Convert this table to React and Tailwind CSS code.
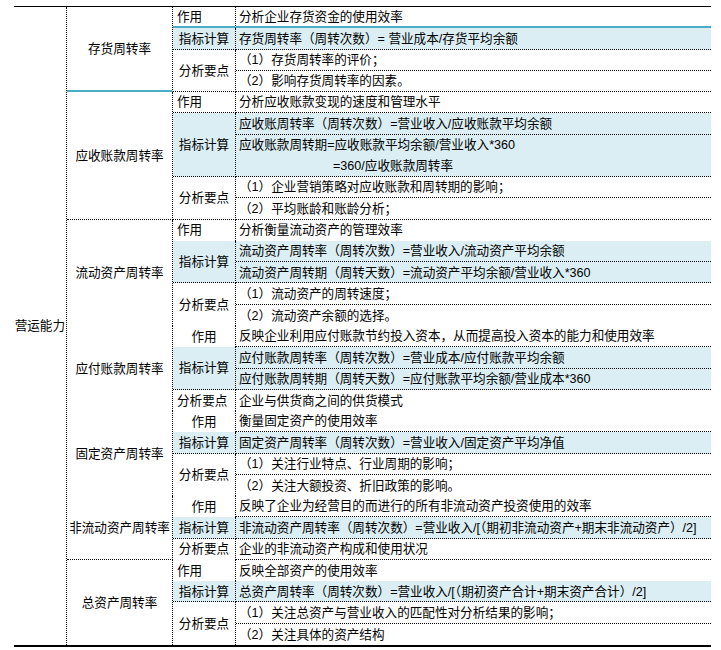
import React from "react";

// 营运能力 analysis table, drawn like an Excel sheet with dotted cell borders

const BLUE_BG = "bg-[#daeef3]";

const cells = [
  // column 1
  { cls: "col-start-1 row-start-1 row-span-30 justify-end pr-px border-r border-dotted border-black", text: "营运能力" },

  // column 2
  { cls: "col-start-2 row-start-1 row-span-4 justify-center border-r border-b-2 border-dotted border-r-black [border-bottom-style:solid] border-b-[#4bacc6]", text: "存货周转率" },
  { cls: "col-start-2 row-start-5 row-span-6 justify-center border-r border-b border-dotted border-black", text: "应收账款周转率" },
  { cls: "col-start-2 row-start-11 row-span-5 justify-center border-r border-dotted border-black", text: "流动资产周转率" },
  { cls: "col-start-2 row-start-16 row-span-4 justify-center border-r border-dotted border-black", text: "应付账款周转率" },
  { cls: "col-start-2 row-start-20 row-span-4 justify-center border-r border-dotted border-black", text: "固定资产周转率" },
  { cls: "col-start-2 row-start-24 row-span-3 justify-center border-r border-b border-dotted border-black", text: "非流动资产周转率" },
  { cls: "col-start-2 row-start-27 row-span-4 justify-center border-r border-dotted border-black", text: "总资产周转率" },

  // column 3
  { cls: "col-start-3 row-start-1 pl-[4px] border-r border-b-2 border-dotted border-r-black [border-bottom-style:solid] border-b-[#4bacc6]", text: "作用" },
  { cls: "col-start-3 row-start-2 justify-center border-r border-b border-dotted border-black " + BLUE_BG, text: "指标计算" },
  { cls: "col-start-3 row-start-3 row-span-2 justify-center border-r border-b border-dotted border-black", text: "分析要点" },
  { cls: "col-start-3 row-start-5 pl-[4px] border-r border-b border-dotted border-black", text: "作用" },
  { cls: "col-start-3 row-start-6 row-span-3 justify-center border-r border-b border-dotted border-black " + BLUE_BG, text: "指标计算" },
  { cls: "col-start-3 row-start-9 row-span-2 justify-center border-r border-b border-dotted border-black", text: "分析要点" },
  { cls: "col-start-3 row-start-11 pl-[4px] border-r border-dotted border-black", text: "作用" },
  { cls: "col-start-3 row-start-12 row-span-2 justify-center border-r border-b border-dotted border-black " + BLUE_BG, text: "指标计算" },
  { cls: "col-start-3 row-start-14 row-span-2 justify-center border-r border-dotted border-black", text: "分析要点" },
  { cls: "col-start-3 row-start-16 justify-center border-r border-dotted border-black", text: "作用" },
  { cls: "col-start-3 row-start-17 row-span-2 justify-center border-r border-b border-dotted border-black " + BLUE_BG, text: "指标计算" },
  { cls: "col-start-3 row-start-19 pl-[4px] border-r border-dotted border-black", text: "分析要点" },
  { cls: "col-start-3 row-start-20 justify-center border-r border-dotted border-black", text: "作用" },
  { cls: "col-start-3 row-start-21 justify-center border-r border-b border-dotted border-black " + BLUE_BG, text: "指标计算" },
  { cls: "col-start-3 row-start-22 row-span-2 justify-center border-r border-dotted border-black", text: "分析要点" },
  { cls: "col-start-3 row-start-24 justify-center border-r border-dotted border-black", text: "作用" },
  { cls: "col-start-3 row-start-25 justify-center border-r border-b border-dotted border-black " + BLUE_BG, text: "指标计算" },
  { cls: "col-start-3 row-start-26 justify-center border-r border-dotted border-black", text: "分析要点" },
  { cls: "col-start-3 row-start-27 pl-[4px] border-r border-dotted border-black", text: "作用" },
  { cls: "col-start-3 row-start-28 justify-center border-r border-b border-dotted border-black " + BLUE_BG, text: "指标计算" },
  { cls: "col-start-3 row-start-29 row-span-2 justify-center border-r border-dotted border-black", text: "分析要点" },

  // column 4
  { cls: "col-start-4 row-start-1 border-b-2 border-solid border-[#4bacc6]", text: "分析企业存货资金的使用效率" },
  { cls: "col-start-4 row-start-2 border-b border-dotted border-black " + BLUE_BG, text: "存货周转率（周转次数）= 营业成本/存货平均余额" },
  { cls: "col-start-4 row-start-3 border-b border-dotted border-black", text: "（1）存货周转率的评价；" },
  { cls: "col-start-4 row-start-4 border-b border-dotted border-black", text: "（2）影响存货周转率的因素。" },
  { cls: "col-start-4 row-start-5 border-b border-dotted border-black", text: "分析应收账款变现的速度和管理水平" },
  { cls: "col-start-4 row-start-6 border-b border-dotted border-black " + BLUE_BG, text: "应收账周转率（周转次数）=营业收入/应收账款平均余额" },
  { cls: "col-start-4 row-start-7 " + BLUE_BG, text: "应收账款周转期=应收账款平均余额/营业收入*360" },
  { cls: "col-start-4 row-start-8 !pl-[97px] border-b border-dotted border-black " + BLUE_BG, text: "=360/应收账款周转率" },
  { cls: "col-start-4 row-start-9 border-b border-dotted border-black", text: "（1）企业营销策略对应收账款和周转期的影响；" },
  { cls: "col-start-4 row-start-10 border-b border-dotted border-black", text: "（2）平均账龄和账龄分析；" },
  { cls: "col-start-4 row-start-11", text: "分析衡量流动资产的管理效率" },
  { cls: "col-start-4 row-start-12 border-b border-dotted border-black " + BLUE_BG, text: "流动资产周转率（周转次数）=营业收入/流动资产平均余额" },
  { cls: "col-start-4 row-start-13 border-b border-dotted border-black " + BLUE_BG, text: "流动资产周转期（周转天数）=流动资产平均余额/营业收入*360" },
  { cls: "col-start-4 row-start-14 border-b border-dotted border-black", text: "（1）流动资产的周转速度；" },
  { cls: "col-start-4 row-start-15", text: "（2）流动资产余额的选择。" },
  { cls: "col-start-4 row-start-16 border-b border-dotted border-black", text: "反映企业利用应付账款节约投入资本，从而提高投入资本的能力和使用效率" },
  { cls: "col-start-4 row-start-17 border-b border-dotted border-black " + BLUE_BG, text: "应付账款周转率（周转次数）=营业成本/应付账款平均余额" },
  { cls: "col-start-4 row-start-18 border-b border-dotted border-black " + BLUE_BG, text: "应付账款周转期（周转天数）=应付账款平均余额/营业成本*360" },
  { cls: "col-start-4 row-start-19", text: "企业与供货商之间的供货模式" },
  { cls: "col-start-4 row-start-20 border-b border-dotted border-black", text: "衡量固定资产的使用效率" },
  { cls: "col-start-4 row-start-21 border-b border-dotted border-black " + BLUE_BG, text: "固定资产周转率（周转次数）=营业收入/固定资产平均净值" },
  { cls: "col-start-4 row-start-22 border-b border-dotted border-black", text: "（1）关注行业特点、行业周期的影响；" },
  { cls: "col-start-4 row-start-23", text: "（2）关注大额投资、折旧政策的影响。" },
  { cls: "col-start-4 row-start-24 border-b border-dotted border-black", text: "反映了企业为经营目的而进行的所有非流动资产投资使用的效率" },
  { cls: "col-start-4 row-start-25 border-b border-dotted border-black " + BLUE_BG, text: "非流动资产周转率（周转次数）=营业收入/[（期初非流动资产+期末非流动资产）/2]" },
  { cls: "col-start-4 row-start-26 border-b border-dotted border-black", text: "企业的非流动资产构成和使用状况" },
  { cls: "col-start-4 row-start-27", text: "反映全部资产的使用效率" },
  { cls: "col-start-4 row-start-28 border-b border-dotted border-black " + BLUE_BG, text: "总资产周转率（周转次数）=营业收入/[（期初资产合计+期末资产合计）/2]" },
  { cls: "col-start-4 row-start-29 border-b border-dotted border-black", text: "（1）关注总资产与营业收入的匹配性对分析结果的影响；" },
  { cls: "col-start-4 row-start-30", text: "（2）关注具体的资产结构" },
];

const App = () => {
  return (
    <div className="min-h-[650px] w-[721px] bg-white pt-[6px] pl-[14px] font-['Liberation_Sans','Noto_Sans_CJK_SC',sans-serif] text-[12.6px] leading-none text-black">
      <div className="grid w-[697px] grid-cols-[53px_106px_63px_475px] grid-rows-[repeat(30,21.27px)] border-t border-b-2 border-solid border-black">
        {cells.map((cell, i) => (
          <div
            key={i}
            className={`flex items-center whitespace-nowrap pt-px ${
              cell.cls.includes("col-start-4") ? "pl-[3px]" : ""
            } ${cell.cls}`}
          >
            {cell.text}
          </div>
        ))}
      </div>
    </div>
  );
};

export default App;
